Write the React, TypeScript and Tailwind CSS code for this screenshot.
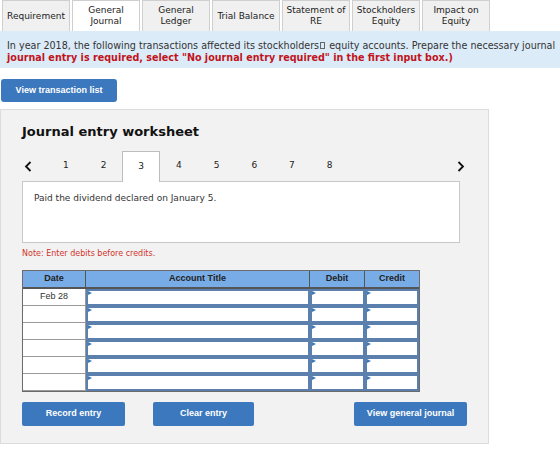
import React from "react";

const tabs = [
  ["Requirement"],
  ["General", "Journal"],
  ["General", "Ledger"],
  ["Trial Balance"],
  ["Statement of", "RE"],
  ["Stockholders", "Equity"],
  ["Impact on", "Equity"],
];

function InputCell({ w }: { w: string }) {
  return (
    <div className={`relative h-[17px] ${w} border-2 border-[#5b80ad] bg-white`}>
      <div className="absolute left-0 top-0 h-0 w-0 border-y-[2px] border-l-[4px] border-y-transparent border-l-[#3b78bd]" />
    </div>
  );
}

export default function App() {
  const sans = { fontFamily: '"DejaVu Sans", Verdana, sans-serif' };
  const arial = { fontFamily: '"Liberation Sans", Arial, sans-serif' };
  return (
    <div className="relative h-[456px] w-[560px] overflow-hidden bg-white text-[#222]" style={sans}>
      {/* Tabs */}
      <div className="flex h-[31px] gap-[2px] pl-[2px]">
        {tabs.map((t, i) => (
          <div
            key={i}
            className={`flex h-[31px] w-[68px] flex-col items-center justify-center border-x border-t border-[#cfcfcf] text-[9px] leading-[11px] ${
              i === 1 ? "bg-white" : "bg-[#f0f0f0]"
            }`}
          >
            {t.map((l, j) => (
              <span key={j}>{l}</span>
            ))}
          </div>
        ))}
      </div>
      {/* Banner */}
      <div className="h-[37px] w-full bg-[#dcebf8] pl-[7px] pt-[9px] text-[9.6px] leading-[12px]">
        <div className="whitespace-nowrap text-[#333]">
          In year 2018, the following transactions affected its stockholders
          <span className="mx-[1px] inline-block h-[7px] w-[5px] border border-[#666]" /> equity accounts. Prepare the necessary journal
        </div>
        <div className="whitespace-nowrap font-bold text-[#c0141c]">
          journal entry is required, select "No journal entry required" in the first input box.)
        </div>
      </div>
      {/* View transaction list */}
      <div className="ml-[1px] mt-[11px] flex h-[23px] w-[116px] items-center justify-center rounded-[3px] bg-[#3b78bd] text-[9px] font-bold text-white" style={arial}>
        View transaction list
      </div>
      {/* Panel */}
      <div className="mt-[7px] h-[335px] w-[489px] border border-[#dcdcdc] bg-[#f2f2f2] pl-[21px]">
        <div className="mt-[13px] text-[13px] font-bold leading-[18px] text-[#111]">Journal entry worksheet</div>
        {/* Pagination */}
        <div className="mt-[10px] flex h-[30px] items-stretch text-[9px]">
          <div className="flex w-[25px] items-center pl-[2px] text-[#111]">
            <svg width="8" height="11" viewBox="0 0 8 11"><path d="M6.5 1 L2 5.5 L6.5 10" fill="none" stroke="#111" strokeWidth="1.8" /></svg>
          </div>
          {[1, 2, 3, 4, 5, 6, 7, 8].map((n) => (
            <div
              key={n}
              className={`flex w-[37.7px] items-center justify-center ${
                n === 3 ? "relative z-10 -mb-[1px] border-x border-t border-[#bdbdbd] bg-white" : ""
              }`}
            >
              {n}
            </div>
          ))}
          <div className="flex flex-1 items-center justify-end pr-[23px]">
            <svg width="8" height="11" viewBox="0 0 8 11"><path d="M1.5 1 L6 5.5 L1.5 10" fill="none" stroke="#111" strokeWidth="1.8" /></svg>
          </div>
        </div>
        <div className="h-[62px] w-[438px] border border-[#c8c8c8] bg-white pl-[11px] pt-[10px] text-[9px] text-[#333]">
          Paid the dividend declared on January 5.
        </div>
        <div className="mt-[6px] text-[8px] leading-[10px] text-[#d0342c]">Note: Enter debits before credits.</div>
        {/* Table */}
        <div className="mt-[11px] w-[398px] border border-[#6b6b6b] bg-white" style={arial}>
          <div className="flex h-[18px] border-b-2 border-[#555] bg-[#78ace6] text-[9px] font-bold text-[#222]">
            <div className="flex w-[63px] items-center justify-center border-r border-[#555]">Date</div>
            <div className="flex w-[224px] items-center justify-center border-r border-[#555]">Account Title</div>
            <div className="flex w-[55px] items-center justify-center border-r border-[#555]">Debit</div>
            <div className="flex flex-1 items-center justify-center">Credit</div>
          </div>
          {[0, 1, 2, 3, 4, 5].map((r) => (
            <div key={r} className="flex h-[17px]">
              <div className="flex w-[63px] items-center justify-center border-b border-r border-[#9a9a9a] text-[9px] text-[#333]">
                {r === 0 ? "Feb 28" : ""}
              </div>
              <InputCell w="w-[224px]" />
              <InputCell w="w-[55px]" />
              <InputCell w="flex-1" />
            </div>
          ))}
        </div>
        {/* Buttons */}
        <div className="mt-[10px] flex h-[24px] text-[9px] font-bold text-white" style={arial}>
          <div className="flex w-[103px] items-center justify-center rounded-[2px] bg-[#3b78bd]">Record entry</div>
          <div className="ml-[28px] flex w-[101px] items-center justify-center rounded-[2px] bg-[#3b78bd]">Clear entry</div>
          <div className="ml-[100px] flex w-[113px] items-center justify-center rounded-[2px] bg-[#3b78bd]">View general journal</div>
        </div>
      </div>
    </div>
  );
}
